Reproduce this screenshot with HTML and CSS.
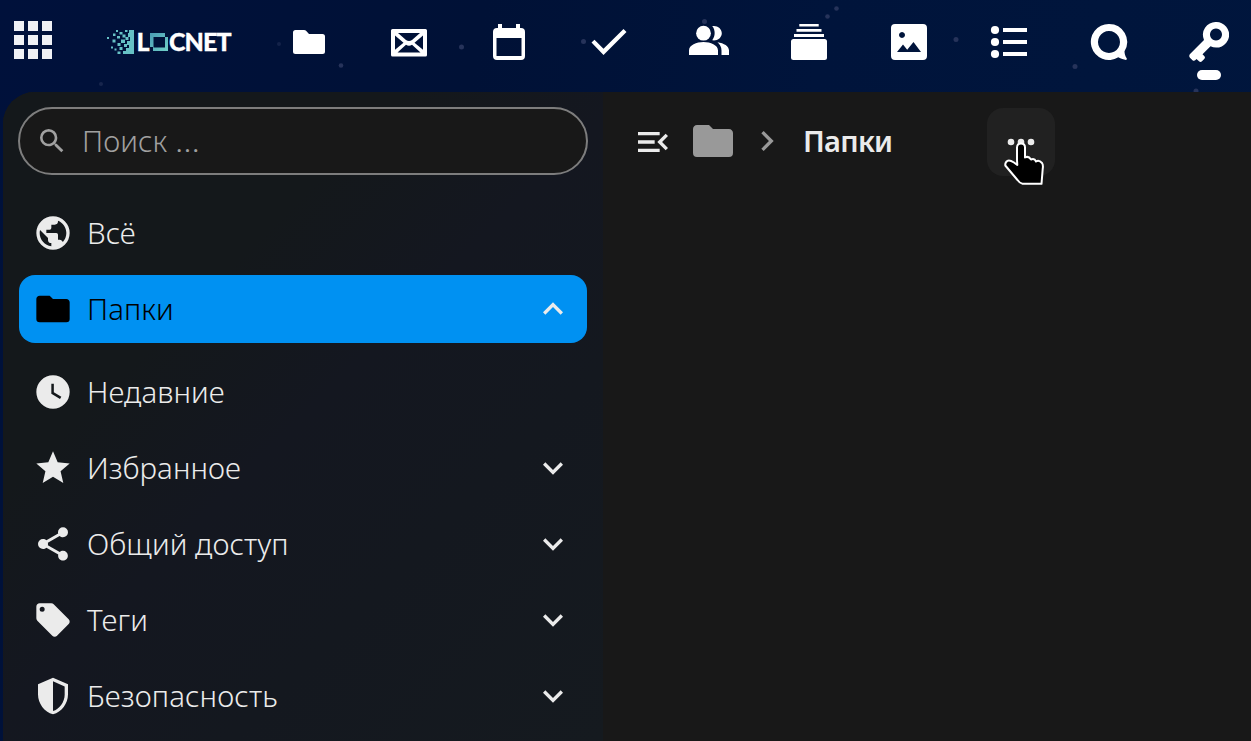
FILE: index.html
```html
<!DOCTYPE html>
<html lang="ru">
<head>
<meta charset="utf-8">
<title>Папки</title>
<link rel="stylesheet" href="styles.css">
</head>
<body>
<header class="topbar">
  <svg class="stars" width="1251" height="92" viewBox="0 0 1251 92" aria-hidden="true">
    <g fill="#26335a"><circle cx="101" cy="84" r="2" opacity=".6"/><circle cx="279" cy="44" r="2" opacity=".5"/><circle cx="341" cy="65.500" r="2.300"/><circle cx="461.500" cy="47" r="2.500"/><circle cx="583.500" cy="41.500" r="2.500"/><circle cx="704.500" cy="21.500" r="2.500"/><circle cx="827.500" cy="16.500" r="2.300"/><circle cx="836.500" cy="8.500" r="2.300"/><circle cx="956" cy="39.500" r="2.500"/><circle cx="1075" cy="66.500" r="2.500"/><circle cx="1196" cy="91" r="2.500"/></g>
  </svg>
  <svg class="launcher" width="38" height="38" viewBox="0 0 38 38"><path fill="#eff1f5" d="M0 0h10v10H0zM14 0h10v10H14zM28 0h10v10H28zM0 14h10v10H0zM14 14h10v10H14zM28 14h10v10H28zM0 28h10v10H0zM14 28h10v10H14zM28 28h10v10H28z"/></svg>
  <svg class="logo" width="140" height="44" viewBox="100 20 140 44">
    <defs><linearGradient id="teal" x1="0" y1="0" x2="1" y2="1"><stop offset="0" stop-color="#4a9cb5"/><stop offset="1" stop-color="#70d0c8"/></linearGradient></defs>
    <g fill="#66c1c5">
      <path d="M129 30h5v24h-11v-3h3v-3h3v-3h-2v-4h3v-4h-2v-4h1z"/>
      <path d="M107 37h2v2h-2zM116 30h2v2h-2zM119.500 32h3v2.500h-3zM125 30h2.500v2H125zM113 33.500h2.500V36H113zM117 36h3v2.500h-3zM122.500 34.500h3v3h-3zM112.500 39.500h3v3h-3zM117.500 43h3v3h-3zM121 39.500h4v3.500h-4zM125.500 37h3v3h-3zM111 46.500h2v2h-2zM114.500 48.500h2v2h-2zM119.500 47h3v3h-3zM124 44h3v3h-3zM117.500 51.500h3V54h-3z"/>
    </g>
    <path fill="url(#teal)" fill-rule="evenodd" d="M150 33h15v4h3v14h-15v-4h-3zM153.500 37v10.500h11.500V37z"/>
    <g class="logo-text"><text x="136.500" y="51">L</text><text x="169" y="51" textLength="62.500" lengthAdjust="spacing">CNET</text></g>
  </svg>
  <nav class="apps">
    <a class="app"><svg viewBox="0 0 40 40"><path d="M6.500 8H15q1.500 0 2.300 1l2.700 3h13.500q2.500 0 2.500 2.500v15q0 2.500-2.500 2.500h-27Q4 32 4 29.500v-19Q4 8 6.500 8z"/></svg></a>
    <a class="app"><svg viewBox="0 0 40 40"><path fill-rule="evenodd" d="M3.500 7h33Q38 7 38 8.500v24.500q0 1.500-1.500 1.500h-33Q2 34.500 2 33v-24.500Q2 7 3.500 7zM9 11l8 7q3 2 6 0L31 11zM6 13.500v14.200l8.500-7zM34 13.500l-8.500 7.200 8.500 7zM17 22.800l-8.500 7.700h23L23 22.800q-3 1.800-6 0z"/></svg></a>
    <a class="app"><svg viewBox="0 0 40 40"><path fill-rule="evenodd" d="M9 2h4v4h14V2h4v4h1q4 0 4 4v24q0 4-4 4H8q-4 0-4-4V10q0-4 4-4h1zM7.500 16v18h25V16z"/></svg></a>
    <a class="app"><svg viewBox="0 0 40 40"><path d="M2.500 20.500L5.500 17.700 14.500 26.700 34.500 7 37.500 10 14.500 33z"/></svg></a>
    <a class="app"><svg viewBox="0 0 40 40"><circle cx="14.500" cy="11.200" r="7.400"/><path d="M0 33v-4.500C0 23 7.500 20 14.500 20S29 23 29 28.500V33zM23.200 4.100c5-1 9.600 2.500 9.600 7.100s-4.600 8-9.600 7.100c3.300-4 3.300-10.200 0-14.200zM28.500 20.300C35 21.200 40 24.300 40 28.500V33h-7.500v-4.500c0-3.300-1.500-6-4-8.200z"/></svg></a>
    <a class="app"><svg viewBox="0 0 40 40"><path d="M10.300 2h19.400v2.600H10.300zM7.500 7h25v2.800h-25zM5 12h30v3H5z"/><rect x="2" y="17" width="36" height="21" rx="2.500"/></svg></a>
    <a class="app"><svg viewBox="0 0 40 40"><path fill-rule="evenodd" d="M6 2h28q4 0 4 4v28q0 4-4 4H6q-4 0-4-4V6q0-4 4-4zM13 10a3 3 0 1 0 .01 0zM8 30h24l-7.500-10-6.300 7.700-4.200-5.200z"/></svg></a>
    <a class="app"><svg viewBox="0 0 40 40"><circle cx="6" cy="8" r="4.100"/><circle cx="6" cy="20" r="4.100"/><circle cx="6" cy="32" r="4.100"/><path d="M14 6h24v4H14zM14 18h24v4H14zM14 30h24v4H14z"/></svg></a>
    <a class="app"><svg viewBox="0 0 40 40"><path fill-rule="evenodd" d="M20 2a18 18 0 1 0 9.300 33.300c2.600 1.500 5.600 2.500 7.600 2.600 1.200-.3 1.200-1.100.6-1.900-1.300-1.800-2-4.300-2-6.700A18 18 0 0 0 20 2zM20 9a11 11 0 1 1-.01 0z"/></svg></a>
    <a class="app app-active"><svg viewBox="0 0 40 40"><path fill-rule="evenodd" d="M27 0A12.800 12.800 0 0 0 15 18L1.300 31.800Q-.8 34 1.200 36L3.500 38.200Q5 39.500 6.500 38L7.500 37 10 39.300Q11.500 40.700 13 39.200L15.200 37Q16.700 35.500 15.200 34L13.500 32.200 21.500 24.200A12.800 12.800 0 1 0 27 0zM27 6.500a6 6 0 1 1-.01 0z"/></svg></a>
  </nav>
</header>
<main class="panel">
  <aside class="sidebar">
    <div class="search">
      <svg class="search-icon" viewBox="0 0 24 24"><path d="M9.500,3A6.500,6.500 0 0,1 16,9.500C16,11.110 15.410,12.590 14.440,13.730L14.710,14H15.500L20.500,19L19,20.500L14,15.500V14.710L13.730,14.440C12.590,15.410 11.110,16 9.500,16A6.500,6.500 0 0,1 3,9.500A6.500,6.500 0 0,1 9.500,3M9.500,5C7,5 5,7 5,9.500C5,12 7,14 9.500,14C12,14 14,12 14,9.500C14,7 12,5 9.500,5Z"/></svg>
      <span class="search-text">Поиск <span class="ellipsis">…</span></span>
    </div>
    <ul class="menu">
      <li class="row"><svg class="icon" viewBox="0 0 24 24"><path d="M17.900,17.390C17.640,16.590 16.890,16 16,16H15V13A1,1 0 0,0 14,12H8V10H10A1,1 0 0,0 11,9V7H13A2,2 0 0,0 15,5V4.590C17.930,5.770 20,8.640 20,12C20,14.080 19.200,15.970 17.900,17.390M11,19.930C7.050,19.440 4,16.080 4,12C4,11.380 4.080,10.780 4.210,10.210L9,15V16A2,2 0 0,0 11,18M12,2A10,10 0 0,0 2,12A10,10 0 0,0 12,22A10,10 0 0,0 22,12A10,10 0 0,0 12,2Z"/></svg><span class="label">Всё</span></li>
      <li class="row row-active"><svg class="icon" viewBox="0 0 24 24"><path d="M10,4H4C2.890,4 2,4.890 2,6V18A2,2 0 0,0 4,20H20A2,2 0 0,0 22,18V8C22,6.890 21.100,6 20,6H12L10,4Z"/></svg><span class="label">Папки</span><svg class="icon chevron" viewBox="0 0 24 24"><path d="M7.410,15.410L12,10.830L16.590,15.410L18,14L12,8L6,14L7.410,15.410Z"/></svg></li>
      <li class="row"><svg class="icon" viewBox="0 0 24 24"><path d="M12,2A10,10 0 0,0 2,12A10,10 0 0,0 12,22A10,10 0 0,0 22,12A10,10 0 0,0 12,2M16.200,16.200L11,13V7H12.500V12.200L17,14.900L16.200,16.200Z"/></svg><span class="label">Недавние</span></li>
      <li class="row"><svg class="icon" viewBox="0 0 24 24"><path d="M12,17.270L18.180,21L16.540,13.970L22,9.240L14.810,8.620L12,2L9.190,8.620L2,9.240L7.450,13.970L5.820,21L12,17.270Z"/></svg><span class="label">Избранное</span><svg class="icon chevron" viewBox="0 0 24 24"><path d="M7.410,8.580L12,13.170L16.590,8.580L18,10L12,16L6,10L7.410,8.580Z"/></svg></li>
      <li class="row"><svg class="icon" viewBox="0 0 24 24"><path d="M18,16.080C17.240,16.080 16.560,16.380 16.040,16.850L8.910,12.700C8.960,12.470 9,12.240 9,12C9,11.760 8.960,11.530 8.910,11.300L15.960,7.190C16.500,7.690 17.210,8 18,8A3,3 0 0,0 21,5A3,3 0 0,0 18,2A3,3 0 0,0 15,5C15,5.240 15.040,5.470 15.090,5.700L8.040,9.810C7.500,9.310 6.790,9 6,9A3,3 0 0,0 3,12A3,3 0 0,0 6,15C6.790,15 7.500,14.690 8.040,14.190L15.160,18.340C15.110,18.550 15.080,18.770 15.080,19C15.080,20.610 16.390,21.910 18,21.910C19.610,21.910 20.920,20.610 20.920,19A2.920,2.920 0 0,0 18,16.080Z"/></svg><span class="label">Общий доступ</span><svg class="icon chevron" viewBox="0 0 24 24"><path d="M7.410,8.580L12,13.170L16.590,8.580L18,10L12,16L6,10L7.410,8.580Z"/></svg></li>
      <li class="row"><svg class="icon" viewBox="0 0 24 24"><path d="M5.500,7A1.500,1.500 0 0,1 4,5.500A1.500,1.500 0 0,1 5.500,4A1.500,1.500 0 0,1 7,5.500A1.500,1.500 0 0,1 5.500,7M21.410,11.580L12.410,2.580C12.050,2.220 11.550,2 11,2H4C2.890,2 2,2.890 2,4V11C2,11.550 2.220,12.050 2.590,12.410L11.580,21.410C11.950,21.770 12.450,22 13,22C13.550,22 14.050,21.770 14.410,21.410L21.410,14.410C21.780,14.050 22,13.550 22,13C22,12.440 21.770,11.940 21.410,11.580Z"/></svg><span class="label">Теги</span><svg class="icon chevron" viewBox="0 0 24 24"><path d="M7.410,8.580L12,13.170L16.590,8.580L18,10L12,16L6,10L7.410,8.580Z"/></svg></li>
      <li class="row"><svg class="icon" viewBox="0 0 24 24"><path d="M21,11C21,16.550 17.160,21.740 12,23C6.840,21.740 3,16.550 3,11V5L12,1L21,5V11M12,21C15.750,20 19,15.540 19,11.220V6.300L12,3.180V21Z"/></svg><span class="label label-wide">Безопасность</span><svg class="icon chevron" viewBox="0 0 24 24"><path d="M7.410,8.580L12,13.170L16.590,8.580L18,10L12,16L6,10L7.410,8.580Z"/></svg></li>
    </ul>
  </aside>
  <section class="content">
    <div class="crumbs">
      <svg class="icon" viewBox="0 0 24 24"><path d="M21,15.610L19.590,17L14.580,12L19.590,7L21,8.390L17.440,12L21,15.610M3,6H16V8H3V6M3,13V11H13V13H3M3,18V16H16V18H3Z"/></svg>
      <svg class="crumb-folder" viewBox="0 0 24 24"><path d="M10,4H4C2.890,4 2,4.890 2,6V18A2,2 0 0,0 4,20H20A2,2 0 0,0 22,18V8C22,6.890 21.100,6 20,6H12L10,4Z"/></svg>
      <svg class="icon crumb-next" viewBox="0 0 24 24"><path d="M8.590,16.580L13.170,12L8.590,7.410L10,6L16,12L10,18L8.590,16.580Z"/></svg>
      <h1 class="title">Папки</h1>
      <button class="more" type="button" aria-label="Действия">
        <svg class="icon" viewBox="0 0 24 24"><path d="M16,12A2,2 0 0,1 18,10A2,2 0 0,1 20,12A2,2 0 0,1 18,14A2,2 0 0,1 16,12M10,12A2,2 0 0,1 12,10A2,2 0 0,1 14,12A2,2 0 0,1 12,14A2,2 0 0,1 10,12M4,12A2,2 0 0,1 6,10A2,2 0 0,1 8,12A2,2 0 0,1 6,14A2,2 0 0,1 4,12Z"/></svg>
      </button>
    </div>
  </section>
</main>
<svg class="cursor" width="44" height="46" viewBox="0 0 44 46"><path d="M17 20V7.500Q17 3.500 21 3.500T25 7.500V17.500Q28.500 15.500 31 19.500Q34.500 18 36 21.500Q39 19.500 42 23Q43.400 25 42.700 29L41.500 43.800H22.500Q20 43.500 17.500 40L5.300 25.500Q5 22 7.500 20.800Q9.500 19.500 14 22.500L17.300 25z"/></svg>
</body>
</html>
```
FILE: styles.css
```css
* { box-sizing: border-box; }
body {
  margin: 0;
  width: 1251px;
  height: 741px;
  overflow: hidden;
  position: relative;
  display: flex;
  flex-direction: column;
  background: linear-gradient(100deg, #00113b 0%, #001136 35%, #00143b 60%, #00163d 100%);
  color: #ebebeb;
  font-family: "Noto Sans", "Open Sans", sans-serif;
  font-size: 29.5px;
}
svg { display: block; flex: none; fill: currentColor; }

.topbar { position: relative; display: flex; align-items: center; height: 92px; flex: none; padding: 0 0 9px 14px; }
.stars { position: absolute; left: 0; top: 0; }
.launcher { margin-top: -3px; }
.logo { margin: 1px 19px 0 48px; }
.logo-text {
  fill: #fff;
  stroke: #fff;
  stroke-width: .3;
  font-family: Lato, sans-serif;
  font-weight: 900;
  font-size: 25px;
}
.apps { display: flex; color: #fff; margin-top: 1px; }
.app { position: relative; width: 100px; display: flex; justify-content: center; }
.app svg { width: 40px; height: 40px; }
.app-active::after {
  content: "";
  position: absolute;
  left: 38px;
  top: 48px;
  width: 24px;
  height: 10px;
  border-radius: 5px;
  background: #fff;
}

.panel { display: flex; flex: 1; margin-left: 3px; border-radius: 32px 0 0 0; overflow: hidden; background: #181818; }
.sidebar {
  width: 600px;
  padding: 15px 15px 0;
  background: linear-gradient(135deg, #14181b 0%, #14181b 32%, #141720 50%, #14181f 70%, #151a1f 100%);
}
.search {
  display: flex;
  align-items: center;
  width: 570px;
  height: 68px;
  padding-left: 16px;
  border: 2px solid #7d7d7d;
  border-radius: 34px;
  background: #181818;
  color: #a0a0a0;
}
.search-icon { width: 32px; height: 32px; }
.search-text { margin-left: 14px; line-height: 40px; font-weight: 330; letter-spacing: .1px; }
.ellipsis { display: inline-block; transform: scaleX(1.15); transform-origin: left; }
.menu { list-style: none; margin: 24px 0 0; padding: 0 0 0 1px; display: flex; flex-direction: column; gap: 8px; }
.row { display: flex; align-items: center; height: 68px; width: 568px; padding: 0 14px; border-radius: 16px; }
.row-active { background: #0091f2; color: #000; margin-bottom: 7px; }
.icon { width: 40px; height: 40px; }
.label { margin-left: 14px; line-height: 40px; font-weight: 330; letter-spacing: .05px; white-space: nowrap; }
.label-wide { letter-spacing: .15px; }
.chevron { margin-left: auto; color: #ebebeb; }

.content { flex: 1; padding: 16px 0 0 30px; }
.crumbs { display: flex; align-items: center; height: 68px; }
.crumb-folder { width: 48px; height: 48px; margin: -2px 10px 0 16px; color: #999; }
.crumb-next { color: #999; margin-top: -2px; }
.title { width: 184px; margin: -2px 0 0 16px; font-size: 29px; font-weight: 650; line-height: 40px; letter-spacing: -.7px; }
.more {
  display: flex;
  align-items: center;
  justify-content: center;
  width: 68px;
  height: 68px;
  padding: 0;
  border: 0;
  border-radius: 16px;
  background: #212121;
  color: #ebebeb;
}
.cursor { position: absolute; left: 1000px; top: 140px; fill: #000; stroke: #fff; stroke-width: 2; stroke-linejoin: round; }
```
